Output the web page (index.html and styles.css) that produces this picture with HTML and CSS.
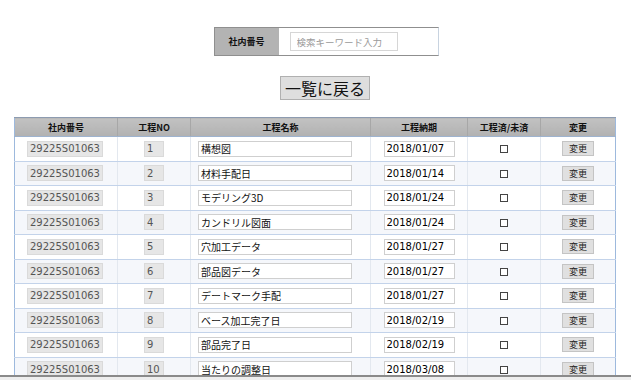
FILE: index.html
```html
<!DOCTYPE html>
<html lang="ja">
<head>
<meta charset="utf-8">
<title>工程一覧</title>
<link rel="stylesheet" href="styles.css">
</head>
<body>
<div class="page">
  <div class="search">
    <div class="search-label">社内番号</div>
    <div class="search-field"><input class="search-input" type="text" placeholder="検索キーワード入力"></div>
  </div>
  <button class="back-btn" type="button">一覧に戻る</button>
  <table class="grid">
    <colgroup>
      <col class="c1"><col class="c2"><col class="c3"><col class="c4"><col class="c5"><col class="c6">
    </colgroup>
    <thead>
      <tr>
        <th>社内番号</th>
        <th>工程NO</th>
        <th>工程名称</th>
        <th>工程納期</th>
        <th>工程済/未済</th>
        <th>変更</th>
      </tr>
    </thead>
    <tbody>
      <tr><td><input class="in-id" value="29225S01063" readonly></td><td><input class="in-no" value="1" readonly></td><td class="name-cell"><input class="in-name" value="構想図"></td><td><input class="in-date" value="2018/01/07"></td><td><span class="chk"></span></td><td><button class="chg" type="button">変更</button></td></tr>
      <tr><td><input class="in-id" value="29225S01063" readonly></td><td><input class="in-no" value="2" readonly></td><td class="name-cell"><input class="in-name" value="材料手配日"></td><td><input class="in-date" value="2018/01/14"></td><td><span class="chk"></span></td><td><button class="chg" type="button">変更</button></td></tr>
      <tr><td><input class="in-id" value="29225S01063" readonly></td><td><input class="in-no" value="3" readonly></td><td class="name-cell"><input class="in-name" value="モデリング3D"></td><td><input class="in-date" value="2018/01/24"></td><td><span class="chk"></span></td><td><button class="chg" type="button">変更</button></td></tr>
      <tr><td><input class="in-id" value="29225S01063" readonly></td><td><input class="in-no" value="4" readonly></td><td class="name-cell"><input class="in-name" value="カンドリル図面"></td><td><input class="in-date" value="2018/01/24"></td><td><span class="chk"></span></td><td><button class="chg" type="button">変更</button></td></tr>
      <tr><td><input class="in-id" value="29225S01063" readonly></td><td><input class="in-no" value="5" readonly></td><td class="name-cell"><input class="in-name" value="穴加工データ"></td><td><input class="in-date" value="2018/01/27"></td><td><span class="chk"></span></td><td><button class="chg" type="button">変更</button></td></tr>
      <tr><td><input class="in-id" value="29225S01063" readonly></td><td><input class="in-no" value="6" readonly></td><td class="name-cell"><input class="in-name" value="部品図データ"></td><td><input class="in-date" value="2018/01/27"></td><td><span class="chk"></span></td><td><button class="chg" type="button">変更</button></td></tr>
      <tr><td><input class="in-id" value="29225S01063" readonly></td><td><input class="in-no" value="7" readonly></td><td class="name-cell"><input class="in-name" value="デートマーク手配"></td><td><input class="in-date" value="2018/01/27"></td><td><span class="chk"></span></td><td><button class="chg" type="button">変更</button></td></tr>
      <tr><td><input class="in-id" value="29225S01063" readonly></td><td><input class="in-no" value="8" readonly></td><td class="name-cell"><input class="in-name" value="ベース加工完了日"></td><td><input class="in-date" value="2018/02/19"></td><td><span class="chk"></span></td><td><button class="chg" type="button">変更</button></td></tr>
      <tr><td><input class="in-id" value="29225S01063" readonly></td><td><input class="in-no" value="9" readonly></td><td class="name-cell"><input class="in-name" value="部品完了日"></td><td><input class="in-date" value="2018/02/19"></td><td><span class="chk"></span></td><td><button class="chg" type="button">変更</button></td></tr>
      <tr><td><input class="in-id" value="29225S01063" readonly></td><td><input class="in-no" value="10" readonly></td><td class="name-cell"><input class="in-name" value="当たりの調整日"></td><td><input class="in-date" value="2018/03/08"></td><td><span class="chk"></span></td><td><button class="chg" type="button">変更</button></td></tr>
    </tbody>
  </table>
</div>
<div class="footer-bar"></div>
</body>
</html>
```
FILE: styles.css
```css
html, body {
  margin: 0;
  padding: 0;
  background: #ffffff;
  overflow: hidden;
}
body {
  font-family: "DejaVu Sans", Verdana, "Noto Sans CJK JP", sans-serif;
  color: #222;
  font-size: 10px;
}
.page {
  display: flex;
  flex-direction: column;
  align-items: center;
  padding-top: 27px;
}
.search {
  display: flex;
  width: 225px;
  height: 29px;
  box-sizing: border-box;
  border: 1px solid #8f8f8f;
  border-right-color: #c8d3e0;
  margin-left: 21px;
}
.search-label {
  width: 64px;
  background: #b3b3b3;
  display: flex;
  align-items: center;
  justify-content: center;
  font-family: "Noto Sans CJK JP", sans-serif;
  font-weight: 700;
  font-size: 9px;
  color: #111;
}
.search-field {
  flex: 1;
  display: flex;
  align-items: center;
  padding-left: 11px;
  background: #fff;
}
.search-input {
  width: 108px;
  height: 19px;
  box-sizing: border-box;
  border: 1px solid #d6d6d6;
  padding: 0 6px;
  font-family: "Noto Sans CJK JP", sans-serif;
  font-size: 9.5px;
  outline: none;
}
.search-input::placeholder {
  color: #9a9a9a;
}
.back-btn {
  margin-top: 20px;
  margin-left: 19px;
  width: 90px;
  height: 24px;
  box-sizing: border-box;
  border: 1px solid #b0b0b0;
  background: #dedede;
  font-family: "Noto Sans CJK JP", sans-serif;
  font-size: 16px;
  line-height: 1;
  color: #111;
  padding: 0;
}
.grid {
  align-self: flex-start;
  margin-left: 14px;
  margin-top: 17px;
  width: 601px;
  border-collapse: collapse;
  table-layout: fixed;
  border-left: 1px solid #9db9dd;
  border-right: 1px solid #9db9dd;
}
.c1 { width: 103px; }
.c2 { width: 73px; }
.c3 { width: 180px; }
.c4 { width: 97px; }
.c5 { width: 73px; }
.c6 { width: 75px; }
.grid th {
  height: 18px;
  padding: 0;
  background: linear-gradient(#c2c2c2, #b1b1b1);
  border-top: 1px solid #8d9bb0;
  border-bottom: 1px solid #9eb3cf;
  border-left: 1px solid #a7a7a7;
  font-family: "Noto Sans CJK JP", sans-serif;
  font-weight: 700;
  font-size: 9px;
  color: #111;
  text-align: center;
}
.grid th:first-child { border-left: none; }
.grid td {
  height: 23.5px;
  padding: 0;
  text-align: center;
  vertical-align: middle;
  border-bottom: 1px solid #c3d3ea;
  border-left: 1px solid #e3e8ef;
}
.grid td:first-child { border-left: none; }
.grid td.name-cell {
  text-align: left;
  padding-left: 7px;
}
.grid tbody tr:nth-child(even) td {
  background: #f5f7fb;
}
.grid input {
  box-sizing: border-box;
  height: 16px;
  font-family: "DejaVu Sans", "Noto Sans CJK JP", sans-serif;
  font-size: 10px;
  padding: 0 2px;
  margin: 0;
  outline: none;
  vertical-align: middle;
}
.in-id {
  width: 76px;
  background: #e6e6e6;
  border: 1px solid #dadada;
  color: #555;
  margin-left: -2px !important;
}
.in-no {
  width: 20px;
  background: #e6e6e6;
  border: 1px solid #dadada;
  color: #555;
}
.grid .in-name {
  width: 154px;
  background: #fff;
  border: 1px solid #cfcfcf;
  color: #111;
  font-family: "Noto Sans CJK JP", sans-serif;
}
.in-date {
  width: 71px;
  background: #fff;
  border: 1px solid #cfcfcf;
  color: #000;
}
.chk {
  display: inline-block;
  width: 6px;
  height: 6px;
  border: 1px solid #444;
  background: #fff;
  vertical-align: middle;
}
.chg {
  width: 32px;
  height: 15px;
  box-sizing: border-box;
  padding: 0;
  border: 1px solid #c4c4c4;
  background: #e0e0e0;
  font-family: "Noto Sans CJK JP", sans-serif;
  font-size: 9px;
  color: #222;
  vertical-align: middle;
}
.footer-bar {
  position: fixed;
  left: 0;
  right: 0;
  top: 375px;
  height: 5px;
  background: #eeeeee;
  border-top: 2px solid #8a8a8a;
}
```
